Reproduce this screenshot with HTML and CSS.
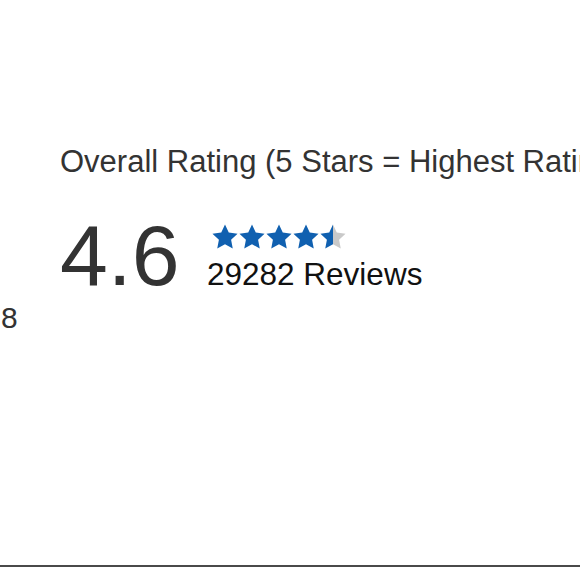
FILE: index.html
```html
<!DOCTYPE html>
<html lang="en">
<head>
<meta charset="utf-8">
<title>Overall Rating</title>
<link rel="stylesheet" href="styles.css">
</head>
<body>
<div class="page">
  <div class="side"><span class="side-num">8</span></div>
  <div class="main">
    <h2 class="heading">Overall Rating (5 Stars = Highest Rating)</h2>
    <div class="rating-row">
      <div class="score">4.6</div>
      <div class="summary">
        <svg class="stars" width="136" height="25" viewBox="0 0 136 25" aria-label="4.6 out of 5 stars">
          <defs>
            <path id="star" d="M13 0.6 L16.76 8.62 L25.55 9.72 L19.09 15.78 L20.76 24.48 L13 20.2 L5.24 24.48 L6.91 15.78 L0.45 9.72 L9.24 8.62 Z"/>
            <linearGradient id="part" x1="0" y1="0" x2="1" y2="0">
              <stop offset="0.5" stop-color="#1060b0"/>
              <stop offset="0.5" stop-color="#c9c9c9"/>
            </linearGradient>
          </defs>
          <use href="#star" x="0" fill="#1060b0"/>
          <use href="#star" x="27" fill="#1060b0"/>
          <use href="#star" x="54" fill="#1060b0"/>
          <use href="#star" x="81" fill="#1060b0"/>
          <use href="#star" x="108" fill="url(#part)"/>
        </svg>
        <div class="count">29282 Reviews</div>
      </div>
    </div>
  </div>
</div>
</body>
</html>
```
FILE: styles.css
```css
html, body {
  margin: 0;
  padding: 0;
  background: #ffffff;
  overflow: hidden;
}
body {
  font-family: "Liberation Sans", Arial, Helvetica, sans-serif;
  color: #333333;
}
.page {
  display: flex;
  height: 565px;
  border-bottom: 2px solid #4a4a4a;
  box-shadow: 0 1px 0 #b0b0b0;
  overflow: hidden;
}
.side {
  width: 60px;
  flex: none;
  padding-top: 301px;
  box-sizing: border-box;
}
.side-num {
  display: block;
  margin-left: 1px;
  font-size: 30px;
  line-height: 34px;
  color: #333333;
}
.main {
  flex: 1;
  padding-top: 144px;
  min-width: 0;
  overflow: hidden;
}
.heading {
  margin: 0;
  font-weight: normal;
  font-size: 31px;
  line-height: 36px;
  color: #333333;
  white-space: nowrap;
}
.rating-row {
  display: flex;
  align-items: flex-start;
  margin-top: 32px;
}
.score {
  font-size: 86px;
  line-height: 86px;
  color: #333333;
  width: 147px;
  flex: none;
}
.summary {
  display: flex;
  flex-direction: column;
  padding-top: 12px;
}
.stars {
  display: block;
  margin-left: 5px;
}
.count {
  margin-top: 8px;
  font-size: 31.5px;
  line-height: 34px;
  color: #111111;
}
```
